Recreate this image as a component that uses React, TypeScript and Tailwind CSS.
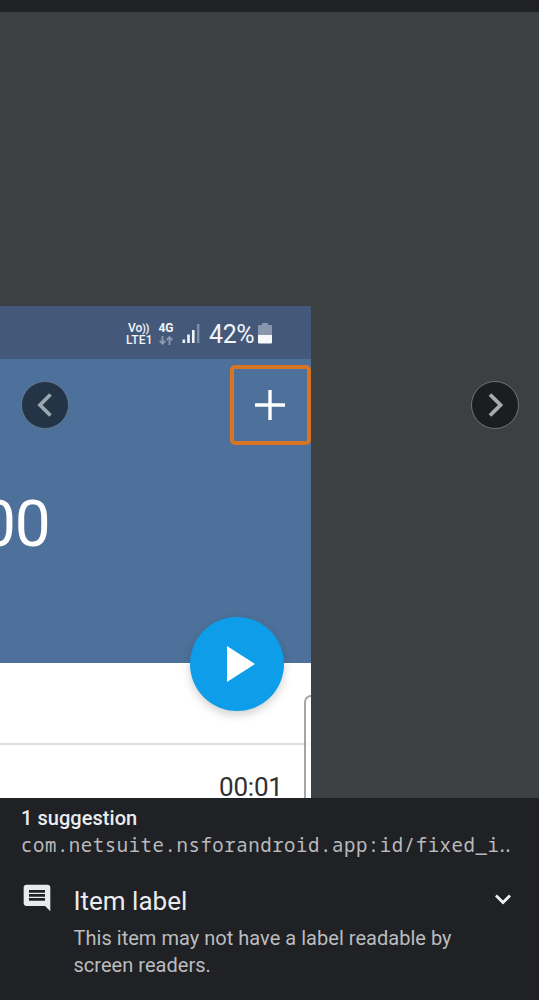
import React from "react";

function StatusBar() {
  return (
    <div className="flex h-[53px] shrink-0 items-start bg-[#445979] pl-[126px] pt-[15px] text-[#f1f4f8]">
      <div className="w-[27px] pt-[2px] text-[12px] font-medium leading-[11px]">
        <div className="flex whitespace-nowrap pl-[2px]">
          Vo
          <span className="text-[10px] font-bold">))</span>
        </div>
        <div className="whitespace-nowrap pt-px tracking-[0.2px]">LTE1</div>
      </div>
      <div className="ml-[5px] w-[16px] pt-[2px] text-center">
        <div className="text-[12px] font-bold leading-[11px]">4G</div>
        <svg className="mx-auto mt-[2px] block" width="14" height="9" viewBox="0 0 14 9" fill="none" stroke="#8d9bb0" strokeWidth="1.8">
          <path d="M3.5 0v7.5M.7 4.8l2.8 2.9 2.8-2.9M10.5 9V1.2M7.7 4l2.8-2.9L13.3 4" />
        </svg>
      </div>
      <svg className="ml-[8px] mt-[3px] block" width="18" height="19" viewBox="0 0 18 19" fill="#f1f4f8">
        <path d="M.5 15.5h2.6V19H.5zM5.2 10.5h2.6V19H5.2zM10 6h2.6v13H10z" />
        <path d="M15 0h2.4v19H15z" fill="#7f8da5" />
      </svg>
      <div className="ml-[9px] w-[46px] whitespace-nowrap text-[25px] leading-[28px] tracking-[-0.4px]">42%</div>
      <svg className="ml-[3px] mt-[2px] block" width="14" height="21" viewBox="0 0 14 21">
        <path d="M4 0h6v2h3q1 0 1 1v9H0V3q0-1 1-1h3z" fill="#8996ac" />
        <path d="M0 12h14v7.5q0 1-1 1H1q-1 0-1-1z" fill="#f8f9fb" />
      </svg>
    </div>
  );
}

function PhoneScreen() {
  return (
    <div className="relative flex h-[492px] w-[310.5px] flex-col overflow-hidden bg-white">
      <StatusBar />
      <div className="h-[304px] shrink-0 bg-[#4d719a] pt-[6px]">
        <div className="ml-auto flex h-[80px] w-[81px] items-center justify-center rounded-[5px] border-4 border-[#d87524]">
          <svg width="32" height="32" viewBox="0 0 32 32" stroke="white" strokeWidth="3.4">
            <path d="M16 1v30M1 16h30" />
          </svg>
        </div>
        <div className="ml-[-20px] mt-[42px] whitespace-nowrap text-[64px] leading-[76px] tracking-[-1.2px] text-white">00</div>
      </div>
      <div className="h-[80px] shrink-0" />
      <div className="h-[2px] shrink-0 bg-[#dedede]" />
      <div className="pl-[219px] pt-[26px] text-[26px] leading-[32px] tracking-[-0.2px] text-[#303033]">00:01</div>
      <button aria-label="Start" className="absolute left-[190px] top-[311px] flex h-[94px] w-[94px] items-center justify-center rounded-full bg-[#0e9de8] shadow-[0_4px_10px_rgba(0,0,0,0.18)]">
        <svg className="ml-[7px]" width="28" height="36" viewBox="0 0 28 36" fill="white">
          <path d="M0 0v36l28-18z" />
        </svg>
      </button>
      <div className="absolute left-[304px] top-[389px] h-[120px] w-[20px] rounded-tl-[7px] border-2 border-[#a6a6a6] bg-white/80" />
    </div>
  );
}

export default function App() {
  return (
    <main className="relative flex h-[1000px] w-[539px] flex-col overflow-hidden bg-[#202124] font-['Roboto',sans-serif]">
      <div className="h-[12px] shrink-0" />
      <section className="h-[786px] shrink-0 bg-[#3d4042] pt-[294px]">
        <PhoneScreen />
      </section>
      <button aria-label="Previous" className="absolute left-[21px] top-[381px] flex h-[48px] w-[48px] items-center justify-center rounded-full border-[1.5px] border-[#60778c] bg-[#223446]">
        <svg width="16" height="24" viewBox="0 0 16 24" fill="none" stroke="#9ba6af" strokeWidth="3.8">
          <path d="M13.5 1.5 3 12l10.500 10.500" />
        </svg>
      </button>
      <button aria-label="Next" className="absolute left-[471px] top-[381px] flex h-[48px] w-[48px] items-center justify-center rounded-full border-[1.5px] border-[#707275] bg-[#1c1d20]">
        <svg width="16" height="24" viewBox="0 0 16 24" fill="none" stroke="#a9aaac" strokeWidth="3.8">
          <path d="M3 1.5 13.500 12 3 22.5" />
        </svg>
      </button>
      <section className="flex-1 pl-[21px] pr-[20px] pt-[7px]">
        <h1 className="text-[20px] font-medium leading-[26px] tracking-[0.05px] text-[#ebecef]">1 suggestion</h1>
        <p className="flex whitespace-nowrap pt-px font-['Noto_Sans_Mono','DejaVu_Sans_Mono',monospace] text-[19px] leading-[27px] tracking-[0.56px] text-[#b9babd]">
          com.netsuite.nsforandroid.app:id/fixed_i<span className="ml-[-3px] tracking-[-5.500px]">..</span>
        </p>
        <div className="mt-[25px] flex">
          <svg className="ml-[-0.5px] mt-[-2px] shrink-0" width="32" height="32" viewBox="0 0 24 24" fill="#e8eaed">
            <path d="M21.99 4c0-1.1-.89-2-1.99-2H4c-1.1 0-2 .9-2 2v12c0 1.1.9 2 2 2h14l4 4-.01-18zM18 14H6v-2h12v2zm0-3H6V9h12v2zm0-3H6V6h12v2z" />
          </svg>
          <div className="ml-[21px] flex-1">
            <h2 className="text-[26px] leading-[34px] text-[#ebecef]">Item label</h2>
            <p className="whitespace-nowrap pt-[6.5px] text-[20px] leading-[27.5px] tracking-[0.03px] text-[#bbbcbf]">
              This item may not have a label readable by
              <br />
              screen readers.
            </p>
          </div>
          <svg className="mr-[8px] mt-[10px] shrink-0" width="16" height="11" viewBox="0 0 16 11" fill="none" stroke="#f0f1f3" strokeWidth="2.8">
            <path d="m1 1.5 7 7 7-7" />
          </svg>
        </div>
      </section>
    </main>
  );
}
